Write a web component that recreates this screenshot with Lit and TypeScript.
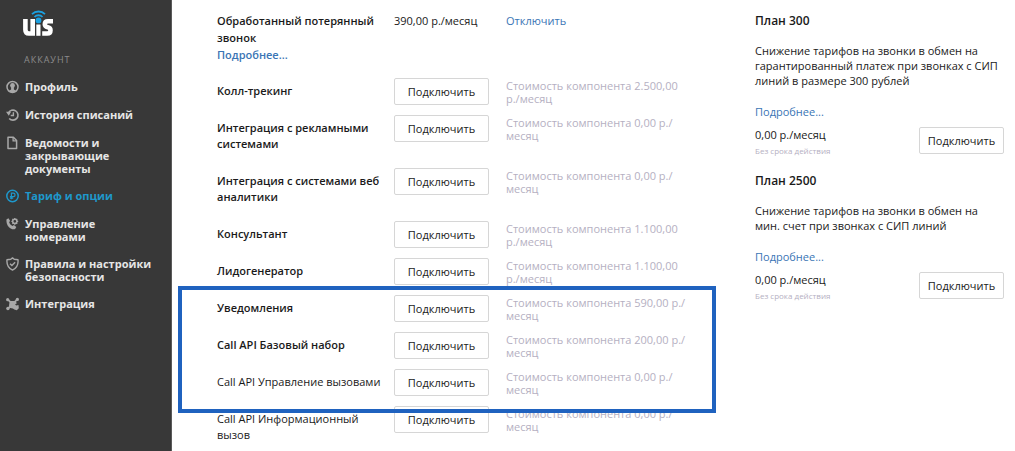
import { LitElement, html, css, svg } from "lit";
import { customElement, property } from "lit/decorators.js";
import { classMap } from "lit/directives/class-map.js";

const icons: Record<string, unknown> = {
  profile: svg`<circle cx="6.500" cy="7" r="5.500" fill="none" stroke="currentColor" stroke-width="1.500"/>
    <circle cx="6.500" cy="5.400" r="2.400" fill="currentColor"/>
    <path d="M5.100 6.500h2.800v3l1.800 1v1.500H3.300v-1.500l1.800-1z" fill="currentColor"/>`,
  history: svg`<path d="M2.400 5.100A5 5 0 1 1 3.200 10.400" fill="none" stroke="currentColor" stroke-width="1.600"/>
    <path d="M0 3.700l5.100 0-2.300 4z" fill="currentColor"/>
    <path d="M7.400 4.200v3.300H4.700" fill="none" stroke="currentColor" stroke-width="1.400"/>`,
  doc: svg`<path d="M2 1.300h5.400l3.200 3.200v8H2z" fill="none" stroke="currentColor" stroke-width="1.500" stroke-linejoin="round"/>
    <path d="M7.100 1.300v3.600h3.400" fill="none" stroke="currentColor" stroke-width="1.300"/>`,
  tariff: svg`<circle cx="6.500" cy="7" r="5.700" fill="none" stroke="currentColor" stroke-width="1.500"/>
    <path d="M5.400 10.300V4.200h1.900a1.700 1.700 0 0 1 0 3.500H3.900M3.900 9.100h3.300" fill="none" stroke="currentColor" stroke-width="1.200"/>`,
  phone: svg`<path d="M.6 2.200L2.500 1.300l1.700 2.600-1.100 1.200c.5 1.900 1.700 3.300 3.500 4l1.300-1 2.400 1.900-1 1.800c-1 .9-2.900.6-4.600-.4C1.800 9.900-.2 6 .6 2.200z" fill="currentColor"/>
    <circle cx="8.800" cy="4.300" r="2.100" fill="none" stroke="currentColor" stroke-width="1.500"/>
    <path d="M8.800.9v1.300M8.800 6.400v1.300M5.400 4.300h1.300M10.900 4.300h1.300M6.400 1.900l1 1M10.200 5.700l1 1M11.200 1.900l-1 1M7.400 5.700l-1 1" stroke="currentColor" stroke-width="1.300"/>`,
  shield: svg`<path d="M6.500 .9l1.700 1.300 3.800.5c.4 4.200-.5 8-5.500 10.400C1.500 10.700.6 6.900 1 2.700l3.800-.5z" fill="none" stroke="currentColor" stroke-width="1.400" stroke-linejoin="round"/>
    <path d="M4 6.800l1.900 1.800 3.200-3.300" fill="none" stroke="currentColor" stroke-width="1.400"/>`,
  integration: svg`<path d="M2 2.900l2.700 2.200M11 2.700L8.500 5.200M2.200 11.300l2.500-2.500" stroke="currentColor" stroke-width="1.800"/>
    <circle cx="1.700" cy="2.700" r="1.600" fill="currentColor"/><circle cx="11.400" cy="2.400" r="1.600" fill="currentColor"/><circle cx="1.900" cy="11.500" r="1.700" fill="currentColor"/>
    <path d="M3.700 3.900h5.600l1.600 2.300-1.800 1.100 1.100 1.300 2.300-.6.300 3.300-2 2-2.500-.9-1.400-.9-2.700-.5L3 8.600z" fill="currentColor"/>`,
};

type NavItem = { icon: string; text: string; active?: boolean };
const nav: NavItem[] = [
  { icon: "profile", text: "Профиль" },
  { icon: "history", text: "История списаний" },
  { icon: "doc", text: "Ведомости и закрывающие документы" },
  { icon: "tariff", text: "Тариф и опции", active: true },
  { icon: "phone", text: "Управление номерами" },
  { icon: "shield", text: "Правила и настройки безопасности" },
  { icon: "integration", text: "Интеграция" },
];

type Option = { name: string; price: string; light?: boolean };
const options: Option[] = [
  { name: "Колл-трекинг", price: "2.500,00 р./месяц" },
  { name: "Интеграция с рекламными системами", price: "0,00 р./месяц" },
  { name: "Интеграция с системами веб аналитики", price: "0,00 р./месяц" },
  { name: "Консультант", price: "1.100,00 р./месяц" },
  { name: "Лидогенератор", price: "1.100,00 р./месяц" },
];
const marked: Option[] = [
  { name: "Уведомления", price: "590,00 р./месяц" },
  { name: "Call API Базовый набор", price: "200,00 р./месяц" },
  { name: "Call API Управление вызовами", price: "0,00 р./месяц", light: true },
];
const rest: Option[] = [
  { name: "Call API Информационный вызов", price: "0,00 р./месяц", light: true },
];

const controls = css`
  a {
    color: #3a75b5;
    text-decoration: none;
  }
  button {
    box-sizing: border-box;
    display: block;
    width: 100%;
    height: 27px;
    padding: 0;
    border: 1px solid #d6d6d6;
    border-radius: 2px;
    background: #fff;
    color: #1a1a1a;
    font: inherit;
    white-space: nowrap;
    cursor: pointer;
  }
`;

@customElement("side-nav")
export class SideNav extends LitElement {
  static styles = css`
    :host {
      display: block;
      box-sizing: border-box;
      background: #383838;
      border-right: 1px solid #5a5a5a;
      padding: 10px 16px 0 6px;
    }
    .logo {
      display: block;
      margin-left: 16px;
    }
    .title {
      margin: 15px 0 13px 18px;
      font-size: 9px;
      line-height: 14px;
      letter-spacing: 1px;
      font-weight: 400;
      color: #8c8c8c;
    }
    ul {
      list-style: none;
      margin: 0;
      padding: 0;
      display: flex;
      flex-direction: column;
      gap: 14px;
    }
    a {
      display: grid;
      grid-template-columns: 14px 1fr;
      gap: 5px;
      color: #e6e6e6;
      font-size: 11px;
      line-height: 13px;
      font-weight: 700;
      text-decoration: none;
    }
    .icon {
      color: #a8a8a8;
      width: 14px;
      height: 14px;
    }
    .active,
    .active .icon {
      color: #1e98cc;
    }
  `;

  render() {
    return html`
      <svg class="logo" width="32" height="28" viewBox="0 0 32 28" role="img" aria-label="UIS">
        <path d="M3.400 9v10.800q0 3.700 3.500 3.700h3.800V9" fill="none" stroke="#fff" stroke-width="4.600"/>
        <path d="M14.300 14.500h4.200V25.800h-4.200z" fill="#fff"/>
        <path d="M31 11.300h-5q-3.200 0-3.200 2.900 0 2.300 3 3 2.700.6 2.700 3 0 3.300-3.300 3.300h-5" fill="none" stroke="#fff" stroke-width="4.600"/>
        <circle cx="16.500" cy="10.400" r="2.900" fill="#1ba1e2"/>
        <path d="M12.500 7a5.500 5.500 0 0 1 8 0M10 4.200a9.200 9.200 0 0 1 13 0" fill="none" stroke="#1ba1e2" stroke-width="1.800"/>
      </svg>
      <h2 class="title">АККАУНТ</h2>
      <nav aria-label="Аккаунт">
        <ul>
          ${nav.map(
            (n) => html`<li>
              <a href="#" class=${classMap({ active: !!n.active })}>
                <svg class="icon" viewBox="0 0 14 14" aria-hidden="true">${icons[n.icon]}</svg>
                <span>${n.text}</span>
              </a>
            </li>`
          )}
        </ul>
      </nav>
    `;
  }
}

@customElement("option-table")
export class OptionTable extends LitElement {
  static styles = [
    controls,
    css`
      :host {
        display: block;
        min-width: 0;
      }
      table {
        width: 100%;
        border-collapse: collapse;
        table-layout: fixed;
      }
      .col-name {
        width: 177px;
      }
      .col-action {
        width: 95px;
      }
      th,
      td {
        padding: 0;
        text-align: left;
        vertical-align: top;
        font-weight: 400;
      }
      th {
        padding: 5px 8px 16px 0;
        line-height: 16px;
      }
      .strong {
        font-weight: 600;
      }
      .first th,
      .first td {
        padding-top: 12px;
        padding-bottom: 15px;
        line-height: 17px;
      }
      .first td {
        white-space: nowrap;
      }
      .gap {
        padding-left: 17px;
      }
      .price {
        padding-top: 1px;
        line-height: 13px;
        color: #b5b0c2;
      }
      .marked {
        position: relative;
      }
      .marked::after {
        content: "";
        position: absolute;
        inset: -9px -26px -7px -39px;
        border: 4px solid #1f62bf;
        pointer-events: none;
      }
    `,
  ];

  private row(o: Option) {
    return html`<tr>
      <th scope="row" class=${classMap({ strong: !o.light })}>${o.name}</th>
      <td><button type="button">Подключить</button></td>
      <td class="gap price">Стоимость компонента ${o.price}</td>
    </tr>`;
  }

  render() {
    return html`<table>
      <colgroup>
        <col class="col-name" />
        <col class="col-action" />
        <col />
      </colgroup>
      <tbody>
        <tr class="first">
          <th scope="row" class="strong">
            Обработанный потерянный звонок<br /><a href="#">Подробнее...</a>
          </th>
          <td>390,00 р./месяц</td>
          <td class="gap"><a href="#">Отключить</a></td>
        </tr>
        ${options.map((o) => this.row(o))}
      </tbody>
      <tbody class="marked">
        ${marked.map((o) => this.row(o))}
      </tbody>
      <tbody>
        ${rest.map((o) => this.row(o))}
      </tbody>
    </table>`;
  }
}

@customElement("plan-card")
export class PlanCard extends LitElement {
  @property() name = "";
  @property() text = "";

  static styles = [
    controls,
    css`
      :host {
        display: block;
      }
      h3 {
        margin: 0 0 13px;
        font-size: 12px;
        line-height: 18px;
        font-weight: 600;
      }
      p {
        margin: 0 0 16px;
        line-height: 15px;
      }
      .more {
        display: block;
        line-height: 15px;
      }
      .buy {
        display: grid;
        grid-template-columns: 1fr 85px;
        align-items: start;
        margin-top: 8px;
      }
      .cost,
      .term {
        line-height: 16px;
      }
      .term {
        font-size: 8px;
        color: #b5b0c2;
      }
    `,
  ];

  render() {
    return html`
      <h3>${this.name}</h3>
      <p>${this.text}</p>
      <a class="more" href="#">Подробнее...</a>
      <div class="buy">
        <div>
          <div class="cost">0,00 р./месяц</div>
          <div class="term">Без срока действия</div>
        </div>
        <button type="button">Подключить</button>
      </div>
    `;
  }
}

@customElement("app-root")
export class AppRoot extends LitElement {
  static styles = css`
    :host {
      display: grid;
      grid-template-columns: 172px minmax(0, 1fr) 260px;
      height: 100vh;
      overflow: hidden;
      background: #fff;
      color: #1a1a1a;
      font: 11px/17px "Open Sans", "Noto Sans", sans-serif;
    }
    .options {
      padding: 0 65px 0 45px;
      min-width: 0;
    }
    .plans {
      display: flex;
      flex-direction: column;
      gap: 13px;
      padding: 12px 11px 0 0;
    }
  `;

  render() {
    return html`
      <side-nav></side-nav>
      <main class="options"><option-table></option-table></main>
      <aside class="plans">
        <plan-card
          name="План 300"
          text="Снижение тарифов на звонки в обмен на гарантированный платеж при звонках с СИП линий в размере 300 рублей"
        ></plan-card>
        <plan-card
          name="План 2500"
          text="Снижение тарифов на звонки в обмен на мин. счет при звонках с СИП линий"
        ></plan-card>
      </aside>
    `;
  }
}
